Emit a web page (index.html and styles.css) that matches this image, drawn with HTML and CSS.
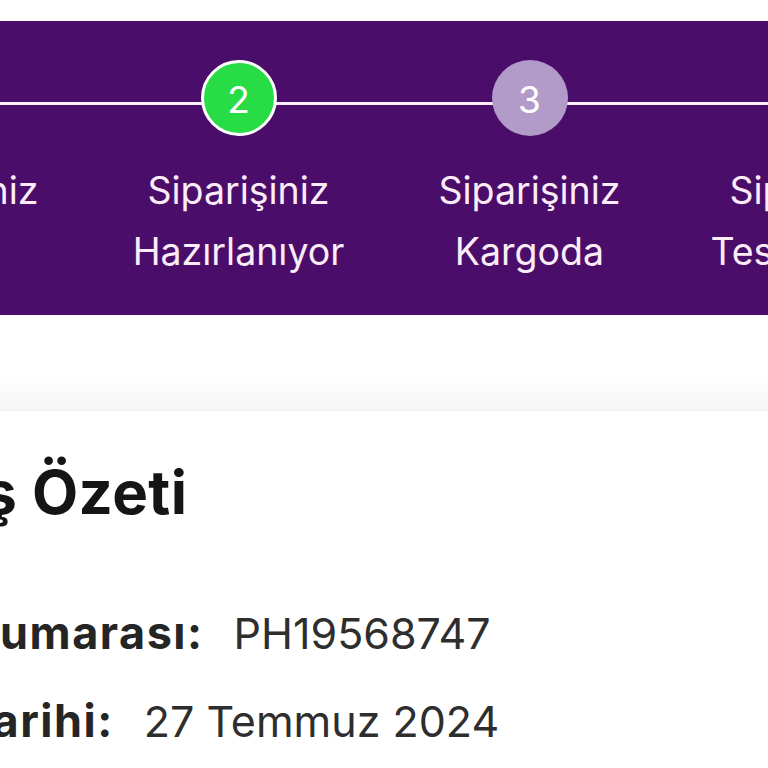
FILE: index.html
```html
<!DOCTYPE html>
<html lang="tr">
<head>
<meta charset="utf-8">
<title>Sipariş Özeti</title>
<link rel="stylesheet" href="styles.css">
</head>
<body>
<div class="page">
  <div class="top-gap"></div>
  <section class="stepper">
    <div class="track">
      <div class="step">
        <div class="circle done">1</div>
        <div class="label">Siparişiniz<br>Alındı</div>
      </div>
      <div class="step">
        <div class="circle active">2</div>
        <div class="label">Siparişiniz<br>Hazırlanıyor</div>
      </div>
      <div class="step">
        <div class="circle pending">3</div>
        <div class="label">Siparişiniz<br>Kargoda</div>
      </div>
      <div class="step">
        <div class="circle pending">4</div>
        <div class="label">Siparişiniz<br>Teslim Edildi</div>
      </div>
    </div>
  </section>
  <div class="shade"></div>
  <section class="summary">
    <h1 class="title">Sipariş Özeti</h1>
    <div class="row"><span class="key">Sipariş Numarası:</span><span class="val">PH19568747</span></div>
    <div class="row"><span class="key">Sipariş Tarihi:</span><span class="val">27 Temmuz 2024</span></div>
  </section>
</div>
</body>
</html>
```

FILE: styles.css
```css
html, body {
  margin: 0;
  padding: 0;
  background: #ffffff;
}
body {
  width: 768px;
  height: 768px;
  overflow: hidden;
  font-family: Inter, "Noto Sans", sans-serif;
}
.page {
  width: 768px;
  overflow: hidden;
}
.top-gap {
  height: 21px;
}
.stepper {
  height: 294px;
  background: #4a0e6a;
  overflow: hidden;
}
.track {
  display: flex;
  width: 1164px;
  margin-left: -198px;
  padding-top: 39px;
  background: linear-gradient(#fbeefa, #fbeefa) no-repeat 0 81px / 100% 3px;
}
.step {
  width: 291px;
  flex: none;
  display: flex;
  flex-direction: column;
  align-items: center;
}
.circle {
  width: 76px;
  height: 76px;
  box-sizing: border-box;
  border-radius: 50%;
  display: flex;
  align-items: center;
  justify-content: center;
  color: #ffffff;
  font-size: 37px;
  font-weight: 400;
  line-height: 1;
  padding-top: 3px;
}
.circle.done, .circle.active {
  background: #27dc44;
  border: 3px solid #ffffff;
}
.circle.pending {
  background: #b29bc9;
}
.label {
  margin-top: 24px;
  color: #fcecf8;
  font-size: 37.5px;
  line-height: 61px;
  text-align: center;
  white-space: nowrap;
}
.shade {
  height: 95px;
  background: linear-gradient(#ffffff 0%, #ffffff 60%, #f6f6f6 100%);
  border-bottom: 1px solid #f2f2f2;
}
.summary {
  margin-left: -211px;
  color: #1a1a1a;
}
.title {
  margin: 0 0 0 22px;
  padding-top: 44px;
  font-size: 60px;
  font-weight: 700;
  letter-spacing: 0.4px;
  line-height: 74px;
  color: #151515;
  white-space: nowrap;
}
.row {
  display: flex;
  align-items: baseline;
  gap: 30px;
  font-size: 43px;
  line-height: 88px;
  white-space: nowrap;
}
.row:first-of-type {
  margin-top: 60px;
}
.key {
  font-weight: 700;
  font-size: 45px;
  letter-spacing: 1.5px;
  color: #252525;
}
.val {
  color: #2e2e2e;
}
```
